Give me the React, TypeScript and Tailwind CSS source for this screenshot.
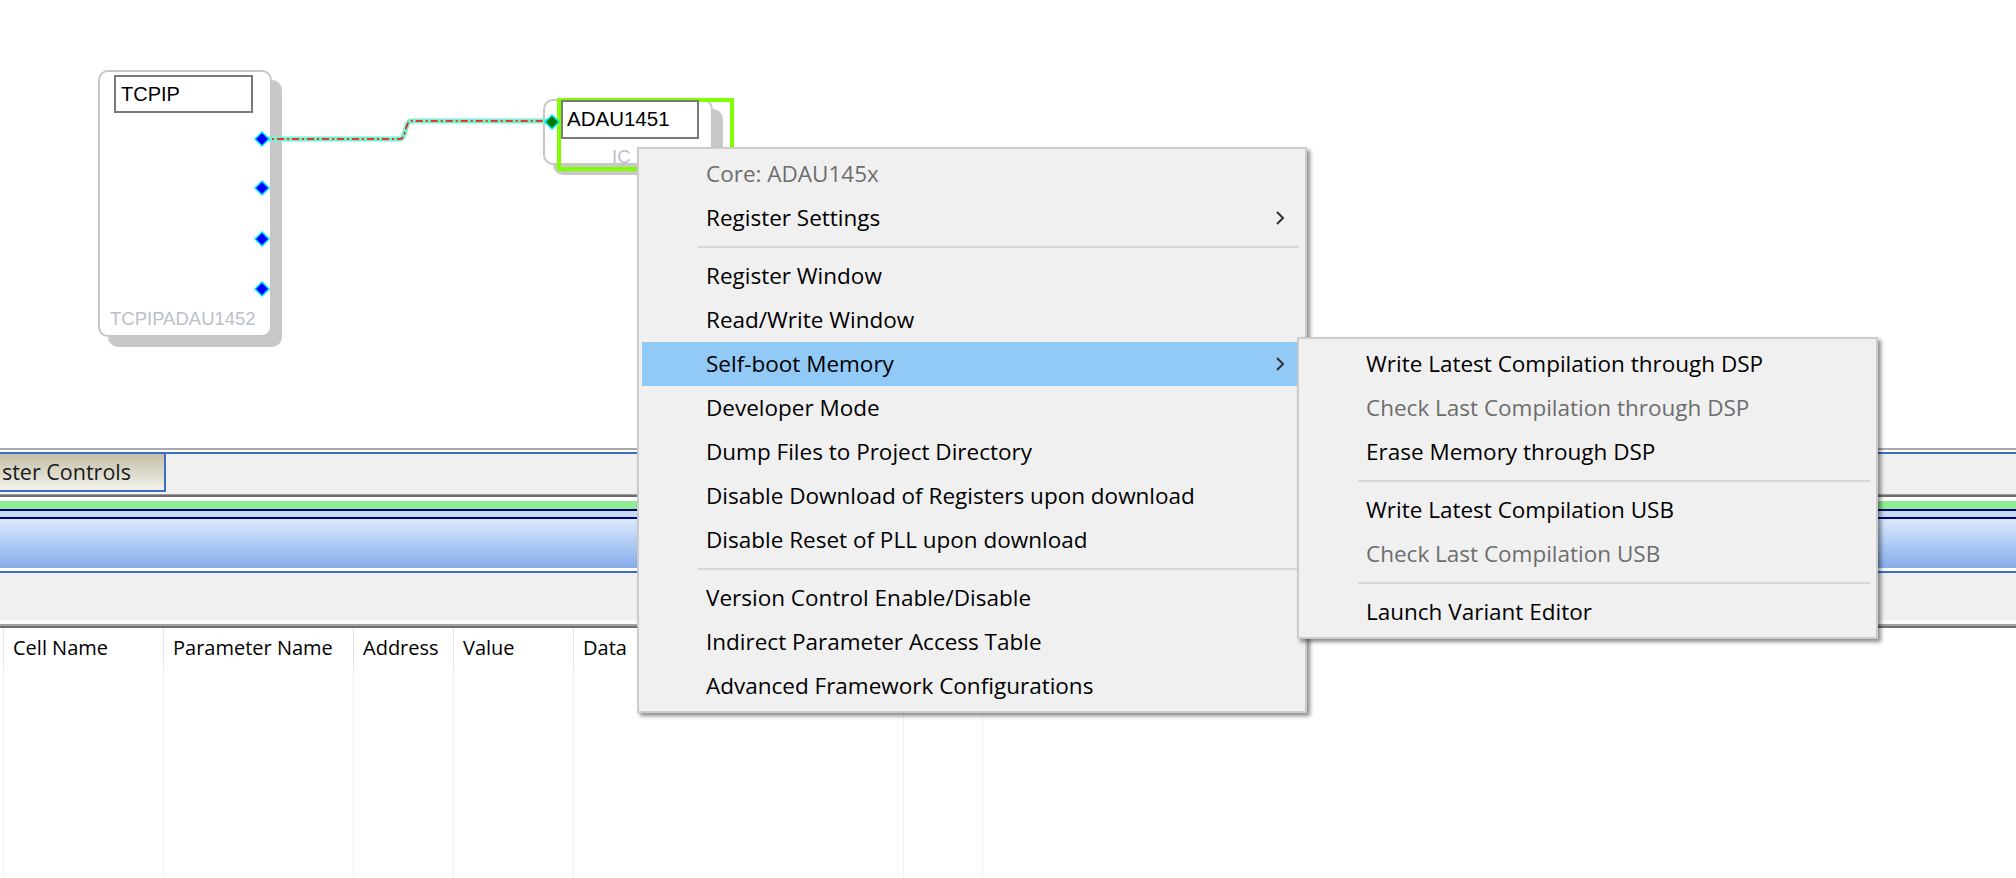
import React from 'react';

type Item = { label: string; disabled?: boolean; sub?: boolean; active?: boolean } | 'sep';

const mainItems: Item[] = [
  { label: 'Core: ADAU145x', disabled: true },
  { label: 'Register Settings', sub: true },
  'sep',
  { label: 'Register Window' },
  { label: 'Read/Write Window' },
  { label: 'Self-boot Memory', sub: true, active: true },
  { label: 'Developer Mode' },
  { label: 'Dump Files to Project Directory' },
  { label: 'Disable Download of Registers upon download' },
  { label: 'Disable Reset of PLL upon download' },
  'sep',
  { label: 'Version Control Enable/Disable' },
  { label: 'Indirect Parameter Access Table' },
  { label: 'Advanced Framework Configurations' },
];

const subItems: Item[] = [
  { label: 'Write Latest Compilation through DSP' },
  { label: 'Check Last Compilation through DSP', disabled: true },
  { label: 'Erase Memory through DSP' },
  'sep',
  { label: 'Write Latest Compilation USB' },
  { label: 'Check Last Compilation USB', disabled: true },
  'sep',
  { label: 'Launch Variant Editor' },
];

// column widths of the parameter grid (border included)
const columns = [
  { w: 'w-[4px]', label: '' },
  { w: 'w-[160px]', label: 'Cell Name' },
  { w: 'w-[190px]', label: 'Parameter Name' },
  { w: 'w-[100px]', label: 'Address' },
  { w: 'w-[120px]', label: 'Value' },
  { w: 'w-[330px]', label: 'Data' },
  { w: 'w-[79px]', label: '' },
];

function Chevron() {
  return (
    <svg width="10" height="16" viewBox="0 0 10 16" className="absolute right-[17px] top-[14px]">
      <polyline points="2,2 8,8 2,14" fill="none" stroke="#333" strokeWidth="2" />
    </svg>
  );
}

function MenuList({ items }: { items: Item[] }) {
  return (
    <div className="flex flex-col p-[3px]">
      {items.map((item, i) => {
        if (item === 'sep') {
          return (
            <div key={i} className="h-[14px] flex items-center pl-[56px] pr-[3px]">
              <div className="h-[2px] w-full bg-[#d7d7d7]" />
            </div>
          );
        }
        return (
          <div
            key={i}
            className={`relative h-[44px] flex items-center pl-[64px] text-[22.5px] ${item.active ? 'bg-[#91c9f7]' : ''} ${item.disabled ? 'text-[#6d6d6d]' : 'text-black'}`}
          >
            {item.label}
            {item.sub && <Chevron />}
          </div>
        );
      })}
    </div>
  );
}

function Diagram() {
  return (
    <div className="relative h-[448px] shrink-0 bg-white font-['Liberation_Sans',Arial,sans-serif]">
      {/* TCPIP block */}
      <div className="absolute left-[108px] top-[80px] w-[174px] h-[267px] rounded-[10px] bg-[#c8c8c8]" />
      <div className="absolute left-[98px] top-[70px] w-[174px] h-[267px] rounded-[10px] border-2 border-[#c6c6c6] bg-white">
        <div className="ml-[14px] mt-[3px] w-[139px] h-[38px] border-2 border-[#7a7a7a] flex items-center pl-[5px] text-[20px] text-black">
          TCPIP
        </div>
        <div className="absolute left-[10px] bottom-[2px] text-[18.5px] text-[#bcbfcc]">TCPIPADAU1452</div>
      </div>

      {/* ADAU1451 block */}
      <div className="absolute left-[553px] top-[109px] w-[170px] h-[66px] rounded-[10px] bg-[#c8c8c8]" />
      <div className="absolute left-[543px] top-[99px] w-[170px] h-[66px] rounded-[10px] border-2 border-[#c6c6c6] bg-white">
        <div className="absolute left-[67px] top-[42px] text-[18.5px] text-[#bcbfcc]">IC</div>
      </div>
      <div className="absolute left-[557px] top-[98px] w-[177px] h-[73px] border-4 border-[#80ff00]" />
      <div className="absolute left-[561px] top-[100px] w-[138px] h-[39px] border-2 border-[#7a7a7a] bg-white flex items-center pl-[4px] text-[20.5px] text-black">
        ADAU1451
      </div>

      {/* wire and pins */}
      <svg className="absolute inset-0" width="2016" height="448">
        <path d="M262 139 H400 C406 139 405 121 411 121 H552" fill="none" stroke="#78f0cc" strokeWidth="5" />
        <path d="M262 139 H400 C406 139 405 121 411 121 H552" fill="none" stroke="#ff0000" strokeWidth="1.5" strokeDasharray="7 3 2 3" />
        {[139, 188, 239, 289].map((y) => (
          <polygon key={y} points={`262,${y - 7} 269,${y} 262,${y + 7} 255,${y}`} fill="#0000ff" stroke="#00e8ff" strokeWidth="1.5" />
        ))}
        <polygon points="552,115 559,122 552,129 545,122" fill="#007a00" stroke="#00e8ff" strokeWidth="1.5" />
      </svg>
    </div>
  );
}

function BottomPanel() {
  return (
    <div className="flex flex-col flex-1 font-['Open_Sans',sans-serif]">
      <div className="h-[2px] bg-[#a9a9a9]" />
      <div className="h-[2px] bg-white" />
      <div className="h-[2px] bg-[#3b6fc6]" />
      <div className="h-[40px] bg-[#f0f0f0] flex items-start">
        <div className="w-[166px] h-[38px] border-r-2 border-b-2 border-[#3b6fc6] bg-gradient-to-b from-[#c3bfa8] to-[#f3f2ec] flex items-center justify-end pr-[33px] text-[21.5px] text-[#1a1a1a] whitespace-nowrap">
          ster Controls
        </div>
      </div>
      <div className="h-px bg-[#a0a0a0]" />
      <div className="h-[2px] bg-[#6e6e6e]" />
      <div className="h-[4px] bg-white" />
      <div className="h-[8px] bg-[#90ee90]" />
      <div className="h-[2px] bg-[#000080]" />
      <div className="h-[6px] bg-[#c8daf4]" />
      <div className="h-[2px] bg-[#000080]" />
      <div className="h-[49px] bg-gradient-to-b from-[#dce9fc] to-[#86acea]" />
      <div className="h-[3px] bg-white" />
      <div className="h-[2px] bg-[#3b6fc6]" />
      <div className="h-[47px] bg-[#f0f0f0]" />
      <div className="h-[4px] bg-[#fafafa]" />
      <div className="h-[2px] bg-[#a0a0a0]" />
      <div className="h-[2px] bg-[#6e6e6e]" />
      <div className="h-[40px] flex bg-white">
        {columns.map((c, i) => (
          <div
            key={i}
            className={`${c.w} shrink-0 border-r border-[#e4e4e4] flex items-center ${c.label ? 'pl-[9px]' : ''} text-[20px] text-black whitespace-nowrap overflow-hidden`}
          >
            {c.label}
          </div>
        ))}
      </div>
      <div className="flex flex-1 bg-white">
        {columns.map((c, i) => (
          <div key={i} className={`${c.w} shrink-0 border-r border-[#f1f1f4]`} />
        ))}
      </div>
    </div>
  );
}

export default function App() {
  return (
    <div className="relative w-[2016px] h-[878px] overflow-hidden bg-white flex flex-col">
      <Diagram />
      <BottomPanel />

      {/* context menu */}
      <div className="absolute left-[637px] top-[147px] w-[670px] border-2 border-[#cccccc] bg-[#f0f0f0] shadow-[3px_3px_4px_rgba(0,0,0,0.45)] font-['Open_Sans',sans-serif]">
        <MenuList items={mainItems} />
      </div>

      {/* Self-boot Memory submenu */}
      <div className="absolute left-[1297px] top-[337px] w-[581px] border-2 border-[#cccccc] bg-[#f0f0f0] shadow-[3px_3px_4px_rgba(0,0,0,0.45)] font-['Open_Sans',sans-serif]">
        <MenuList items={subItems} />
      </div>
    </div>
  );
}
